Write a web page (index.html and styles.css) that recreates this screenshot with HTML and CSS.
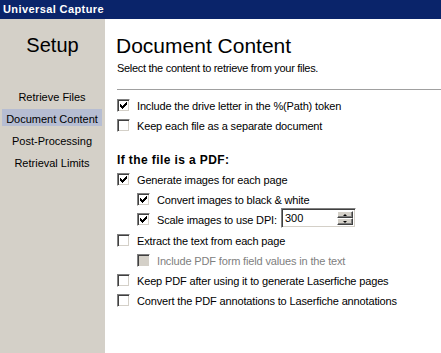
FILE: index.html
```html
<!DOCTYPE html>
<html>
<head>
<meta charset="utf-8">
<link rel="stylesheet" href="styles.css">
</head>
<body>
<div class="window">
  <div class="titlebar">Universal Capture</div>
  <div class="layout">
    <div class="sidebar">
      <div class="side-title">Setup</div>
      <ul class="nav">
        <li class="nav-item">Retrieve Files</li>
        <li class="nav-item selected">Document Content</li>
        <li class="nav-item">Post-Processing</li>
        <li class="nav-item">Retrieval Limits</li>
      </ul>
    </div>
    <div class="main">
      <h1 class="heading">Document Content</h1>
      <p class="subtitle">Select the content to retrieve from your files.</p>
      <div class="separator"></div>
      <div class="options">
        <div class="row"><span class="cb checked"></span><span class="label">Include the drive letter in the %(Path) token</span></div>
        <div class="row"><span class="cb"></span><span class="label">Keep each file as a separate document</span></div>
        <div class="section">If the file is a PDF:</div>
        <div class="row"><span class="cb checked"></span><span class="label">Generate images for each page</span></div>
        <div class="row sub"><span class="cb checked"></span><span class="label">Convert images to black &amp; white</span></div>
        <div class="row sub tall"><span class="cb checked"></span><span class="label">Scale images to use DPI:</span>
          <span class="spinner"><span class="spin-value">300</span><span class="spin-buttons"><span class="spin-btn up"></span><span class="spin-btn down"></span></span></span>
        </div>
        <div class="row"><span class="cb"></span><span class="label">Extract the text from each page</span></div>
        <div class="row sub disabled"><span class="cb"></span><span class="label">Include PDF form field values in the text</span></div>
        <div class="row"><span class="cb"></span><span class="label">Keep PDF after using it to generate Laserfiche pages</span></div>
        <div class="row"><span class="cb"></span><span class="label">Convert the PDF annotations to Laserfiche annotations</span></div>
      </div>
    </div>
  </div>
</div>
</body>
</html>
```
FILE: styles.css
```css
html, body {
  margin: 0;
  padding: 0;
  background: #ffffff;
}
body {
  font-family: "Liberation Sans", Arial, sans-serif;
  font-size: 11px;
  color: #000000;
}
.window {
  width: 441px;
  height: 353px;
  overflow: hidden;
  display: flex;
  flex-direction: column;
}
.titlebar {
  height: 19px;
  line-height: 19px;
  background: #0a246a;
  color: #ffffff;
  font-weight: bold;
  letter-spacing: 0.4px;
  padding-left: 3px;
  flex: none;
}
.layout {
  flex: 1;
  display: flex;
}
.sidebar {
  width: 105px;
  background: #d4d0c8;
  flex: none;
}
.side-title {
  margin-top: 15px;
  font-size: 20px;
  line-height: 23px;
  text-align: center;
}
.nav {
  list-style: none;
  margin: 30px 0 0 0;
  padding: 0;
  display: flex;
  flex-direction: column;
  gap: 5px;
}
.nav-item {
  height: 17px;
  box-sizing: border-box;
  padding-top: 3px;
  line-height: 14px;
  margin: 0 3px 0 2px;
  text-align: center;
}
.nav-item.selected {
  background: #b6bdd2;
}
.main {
  flex: 1;
  padding-left: 12px;
}
.heading {
  margin: 15px 0 0 -1px;
  font-size: 21px;
  line-height: 23px;
  font-weight: normal;
}
.subtitle {
  margin: 5px 0 0 0;
  line-height: 13px;
  letter-spacing: -0.3px;
}
.separator {
  margin-top: 14px;
  height: 1px;
  background: #a0a0a0;
}
.options {
  margin-top: 6px;
  display: flex;
  flex-direction: column;
}
.row {
  height: 20px;
  display: flex;
  align-items: flex-start;
  line-height: 20px;
}
.label {
  letter-spacing: -0.15px;
}
.row.sub {
  padding-left: 20px;
}
.row.tall {
  height: 21px;
}
.section {
  margin-top: 15px;
  font-weight: bold;
  font-size: 12px;
  letter-spacing: 0.4px;
  line-height: 19px;
  height: 19px;
}
.cb {
  flex: none;
  width: 13px;
  height: 13px;
  margin-top: 3px;
  margin-right: 7px;
  box-sizing: border-box;
  border: 1px solid;
  border-color: #808080 #ffffff #ffffff #808080;
  box-shadow: inset 1px 1px 0 #404040, inset -1px -1px 0 #d4d0c8;
  background: #ffffff;
  position: relative;
}
.cb.checked::after {
  content: "";
  position: absolute;
  left: 2px;
  top: 2px;
  width: 7px;
  height: 7px;
  background: url("data:image/svg+xml;utf8,<svg xmlns='http://www.w3.org/2000/svg' width='7' height='7' shape-rendering='crispEdges'><path d='M6 0h1v3h-1zM5 1h1v3h-1zM4 2h1v3h-1zM3 3h1v3h-1zM2 4h1v3h-1zM1 3h1v3h-1zM0 2h1v3h-1z' fill='black'/></svg>") no-repeat;
}
.row.disabled .cb {
  background: #d4d0c8;
}
.row.disabled .label {
  color: #808080;
}
.spinner {
  margin-left: 4px;
  margin-top: -2px;
  width: 75px;
  height: 20px;
  box-sizing: border-box;
  border: 1px solid;
  border-color: #808080 #ffffff #ffffff #808080;
  box-shadow: inset 1px 1px 0 #404040, inset -1px -1px 0 #d4d0c8;
  background: #ffffff;
  display: flex;
  padding: 2px 2px 2px 3px;
}
.spin-value {
  flex: 1;
  line-height: 14px;
  font-size: 11px;
}
.spin-buttons {
  width: 16px;
  display: flex;
  flex-direction: column;
}
.spin-btn {
  flex: 1;
  background: #d4d0c8;
  box-sizing: border-box;
  border: 1px solid;
  border-color: #ffffff #404040 #404040 #ffffff;
  box-shadow: inset -1px -1px 0 #808080;
  position: relative;
}
.spin-btn::after {
  content: "";
  position: absolute;
  left: 5px;
  width: 0;
  height: 0;
  border-left: 2px solid transparent;
  border-right: 2px solid transparent;
}
.spin-btn.up::after {
  top: 2px;
  border-bottom: 2px solid #000;
}
.spin-btn.down::after {
  top: 2px;
  border-top: 2px solid #000;
}
```
